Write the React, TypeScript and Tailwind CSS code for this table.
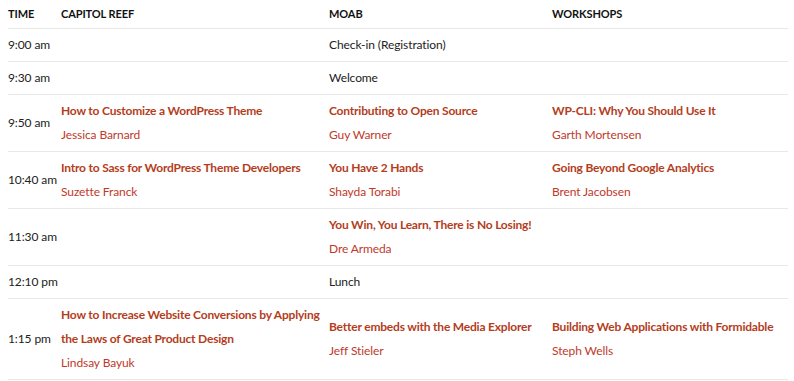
import React from "react";

type Session = { title: string; speaker: string };
type Cell = Session | string | null;

type Row = {
  time: string;
  reef: Cell;
  moab: Cell;
  workshops: Cell;
};

const rows: Row[] = [
  { time: "9:00 am", reef: null, moab: "Check-in (Registration)", workshops: null },
  { time: "9:30 am", reef: null, moab: "Welcome", workshops: null },
  {
    time: "9:50 am",
    reef: { title: "How to Customize a WordPress Theme", speaker: "Jessica Barnard" },
    moab: { title: "Contributing to Open Source", speaker: "Guy Warner" },
    workshops: { title: "WP-CLI: Why You Should Use It", speaker: "Garth Mortensen" },
  },
  {
    time: "10:40 am",
    reef: { title: "Intro to Sass for WordPress Theme Developers", speaker: "Suzette Franck" },
    moab: { title: "You Have 2 Hands", speaker: "Shayda Torabi" },
    workshops: { title: "Going Beyond Google Analytics", speaker: "Brent Jacobsen" },
  },
  {
    time: "11:30 am",
    reef: null,
    moab: { title: "You Win, You Learn, There is No Losing!", speaker: "Dre Armeda" },
    workshops: null,
  },
  { time: "12:10 pm", reef: null, moab: "Lunch", workshops: null },
  {
    time: "1:15 pm",
    reef: {
      title: "How to Increase Website Conversions by Applying the Laws of Great Product Design",
      speaker: "Lindsay Bayuk",
    },
    moab: { title: "Better embeds with the Media Explorer", speaker: "Jeff Stieler" },
    workshops: { title: "Building Web Applications with Formidable", speaker: "Steph Wells" },
  },
];

function CellContent({ cell }: { cell: Cell }) {
  if (!cell) return null;
  if (typeof cell === "string") return <span className="text-[#222]">{cell}</span>;
  return (
    <div>
      <a href="#" className="block font-bold tracking-[-0.2px] text-[#b43d1c]">
        {cell.title}
      </a>
      <span className="block text-[#c0392b]">{cell.speaker}</span>
    </div>
  );
}

export default function App() {
  return (
    <div className="bg-white pl-2" style={{ fontFamily: "Lato, 'Open Sans', sans-serif" }}>
      <table className="w-[780px] table-fixed border-collapse text-[12px] leading-6 tracking-[-0.1px]">
        <thead>
          <tr className="border-b border-[#e8e8e8] text-left text-[11px] uppercase tracking-[-0.1px] text-[#111]">
            <th className="w-[53px] pt-[2px] pb-[2px] font-bold">Time</th>
            <th className="w-[268px] pt-[2px] pb-[2px] font-bold">Capitol Reef</th>
            <th className="w-[223px] pt-[2px] pb-[2px] font-bold">Moab</th>
            <th className="pt-[2px] pb-[2px] font-bold">Workshops</th>
          </tr>
        </thead>
        <tbody>
          {rows.map((row) => (
            <tr key={row.time} className="border-b border-[#e8e8e8] align-middle">
              <td className="whitespace-nowrap py-1 text-[#222]">{row.time}</td>
              <td className="py-1 pr-0.5">
                <CellContent cell={row.reef} />
              </td>
              <td className="py-1 pr-2">
                <CellContent cell={row.moab} />
              </td>
              <td className="py-1 pr-2">
                <CellContent cell={row.workshops} />
              </td>
            </tr>
          ))}
        </tbody>
      </table>
    </div>
  );
}
